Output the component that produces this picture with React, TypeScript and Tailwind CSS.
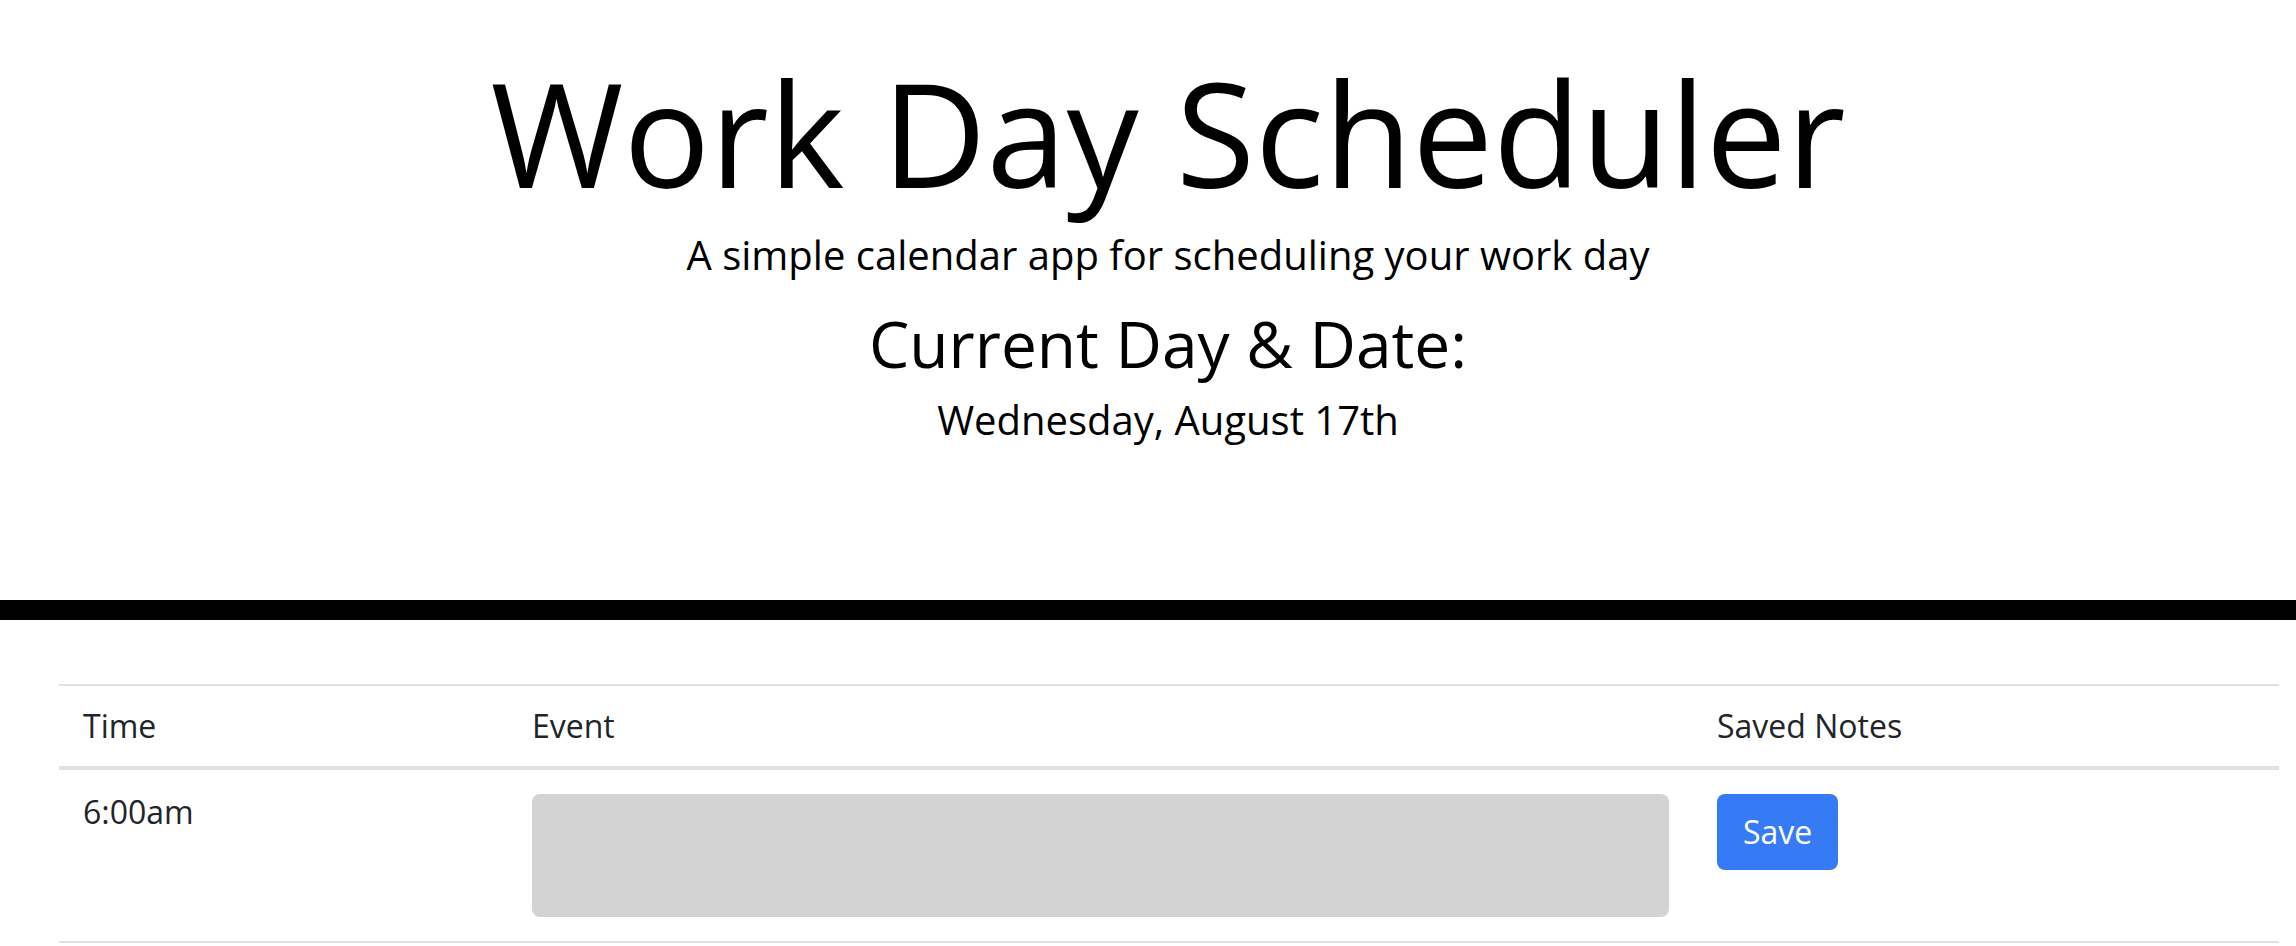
import React from "react";

export default function App() {
  return (
    <div className="min-h-screen bg-white font-['Open_Sans','Liberation_Sans',sans-serif]">
      <header className="border-b-[20px] border-black pb-[150px] pl-[40px] pt-[46px] text-center text-black">
        <h1 className="text-[144px] font-normal leading-[1.2]">Work Day Scheduler</h1>
        <p className="mt-[6px] text-[40px] leading-[1.5]">A simple calendar app for scheduling your work day</p>
        <h2 className="mt-[21px] text-[64px] font-normal leading-[1.2]">Current Day &amp; Date:</h2>
        <p className="mt-[7px] text-[40px] leading-[1.5]">Wednesday, August 17th</p>
      </header>

      <div className="ml-[59px] mt-[64px] w-[2220px] text-[32px] leading-[1.5] text-[#212529]">
        <div className="grid grid-cols-[449px_1185px_586px] border-b-[4px] border-t-2 border-b-[#dee2e6] border-t-[#dee2e6]">
          <div className="px-[24px] py-[16px]">Time</div>
          <div className="px-[24px] py-[16px]">Event</div>
          <div className="px-[24px] py-[16px]">Saved Notes</div>
        </div>
        <div className="grid grid-cols-[449px_1185px_586px] border-b-2 border-[#dee2e6]">
          <div className="px-[24px] pt-[18px]">6:00am</div>
          <div className="px-[24px] py-[24px]">
            <textarea className="block h-[123px] w-full resize-none rounded-[8px] bg-[#d3d3d3] outline-none" />
          </div>
          <div className="px-[24px] py-[24px]">
            <button className="rounded-[8px] border-2 border-transparent bg-[#377af5] px-[24px] py-[12px] text-[32px] leading-[1.5] text-white">
              Save
            </button>
          </div>
        </div>
      </div>
    </div>
  );
}
